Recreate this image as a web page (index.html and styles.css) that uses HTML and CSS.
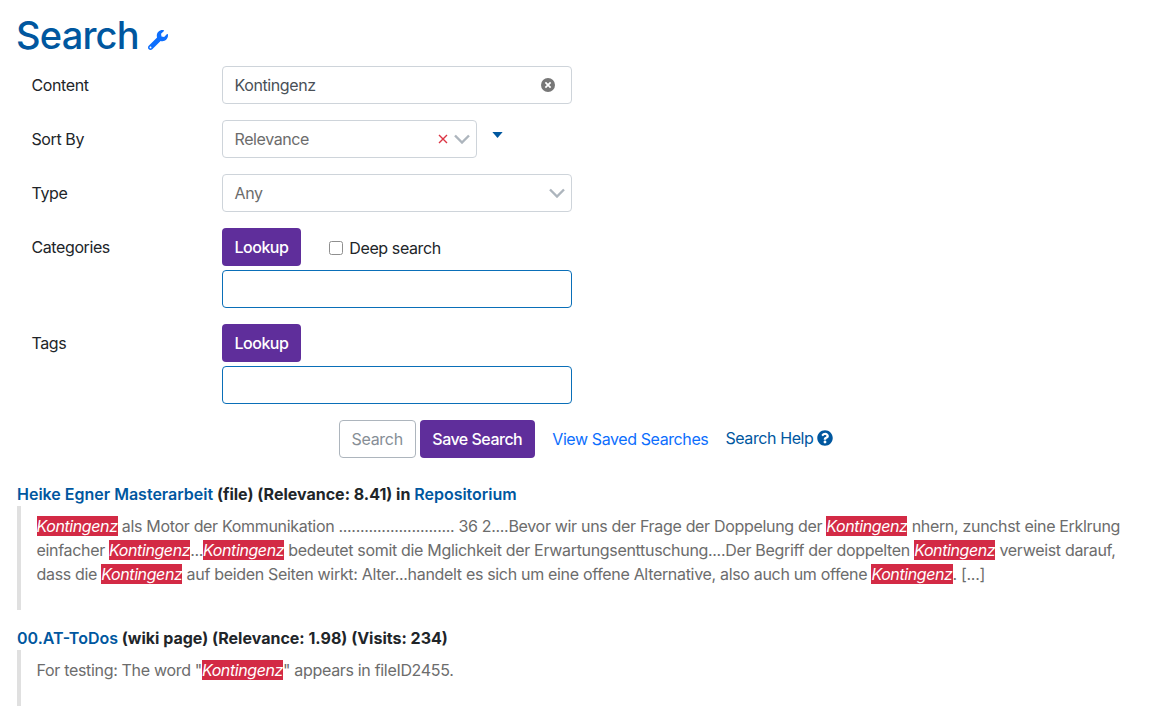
FILE: index.html
```html
<!DOCTYPE html>
<html lang="en">
<head>
<meta charset="utf-8">
<title>Search</title>
<link rel="stylesheet" href="styles.css">
</head>
<body>
<h1 class="title">Search <a class="wrench" href="#"><svg viewBox="0 0 512 512" width="20" height="20"><path fill="#0d6efd" d="M507.73 109.1c-2.24-9.03-13.54-12.09-20.12-5.51l-74.36 74.36-67.88-11.31-11.31-67.88 74.36-74.36c6.62-6.62 3.43-17.9-5.66-20.16-47.38-11.74-99.55.91-136.58 37.93-39.64 39.64-50.55 97.1-34.05 147.2L18.74 402.76c-24.99 24.99-24.99 65.51 0 90.5 24.99 24.99 65.51 24.99 90.5 0l213.21-213.21c50.12 16.71 107.47 5.68 147.37-34.22 37.07-37.07 49.7-89.32 37.91-136.73zM64 472c-13.25 0-24-10.75-24-24 0-13.26 10.75-24 24-24s24 10.74 24 24c0 13.25-10.75 24-24 24z"/></svg></a></h1>
<form class="form">
  <div class="row">
    <label class="label">Content</label>
    <div class="field">
      <div class="control wide"><span class="value dark">Kontingenz</span>
        <svg class="clear" viewBox="0 0 16 16" width="14" height="14"><circle cx="8" cy="8" r="8" fill="#777"/><path d="M5 5l6 6M11 5l-6 6" stroke="#fff" stroke-width="2"/></svg>
      </div>
    </div>
  </div>
  <div class="row">
    <label class="label">Sort By</label>
    <div class="field sort">
      <div class="control narrow"><span class="value">Relevance</span>
        <svg class="x" viewBox="0 0 10 10" width="10" height="10"><path d="M1 1l8 8M9 1l-8 8" stroke="#dc3545" stroke-width="1.4"/></svg>
        <svg class="chev" viewBox="0 0 16 10" width="16" height="10"><path d="M1 1.5l7 7 7-7" fill="none" stroke="#adb5bd" stroke-width="2.4"/></svg>
      </div>
      <svg class="caret" viewBox="0 0 12 7" width="11" height="6"><path d="M0 0h12L6 7z" fill="#00579f"/></svg>
    </div>
  </div>
  <div class="row">
    <label class="label">Type</label>
    <div class="field">
      <div class="control wide"><span class="value">Any</span>
        <svg class="chev" viewBox="0 0 16 10" width="16" height="10"><path d="M1 1.5l7 7 7-7" fill="none" stroke="#adb5bd" stroke-width="2.4"/></svg>
      </div>
    </div>
  </div>
  <div class="row">
    <label class="label">Categories</label>
    <div class="field stack">
      <div class="tools">
        <button class="btn purple" type="button">Lookup</button>
        <label class="check"><span class="box"></span>Deep search</label>
      </div>
      <div class="control wide focus"></div>
    </div>
  </div>
  <div class="row">
    <label class="label">Tags</label>
    <div class="field stack">
      <div class="tools">
        <button class="btn purple" type="button">Lookup</button>
      </div>
      <div class="control wide focus"></div>
    </div>
  </div>
  <div class="actions">
    <button class="btn ghost" type="button">Search</button>
    <button class="btn purple" type="button">Save Search</button>
    <a class="view" href="#">View Saved Searches</a>
    <a class="help" href="#">Search Help <svg viewBox="0 0 512 512" width="16" height="16"><path fill="#00579f" d="M504 256c0 137-111 248-248 248S8 393 8 256C8 119 119 8 256 8s248 111 248 248zM262.7 90c-54.5 0-89.3 23-116.5 63.8-3.5 5.3-2.4 12.4 2.7 16.3l34.7 26.3c5.2 3.9 12.6 3 16.7-2.1 17.9-22.7 30.1-35.8 57.3-35.8 20.4 0 45.7 13.1 45.7 32.9 0 15-12.4 22.7-32.5 34C247.1 238.5 216 254.9 216 296v4c0 6.6 5.4 12 12 12h56c6.6 0 12-5.4 12-12v-1.3c0-28.5 83.2-29.6 83.2-106.7 0-58-60.2-102-116.5-102zM256 338c-25.4 0-46 20.6-46 46 0 25.4 20.6 46 46 46s46-20.6 46-46c0-25.4-20.6-46-46-46z"/></svg></a>
  </div>
</form>
<section class="results">
  <div class="result">
    <div class="heading"><a href="#">Heike Egner Masterarbeit</a> (file) (Relevance: 8.41) in <a href="#">Repositorium</a></div>
    <blockquote class="quote tall"><mark>Kontingenz</mark> als Motor der Kommunikation ........................... 36 2....Bevor wir uns der Frage der Doppelung der <mark>Kontingenz</mark> nhern, zunchst eine Erklrung einfacher <mark>Kontingenz</mark>...<mark>Kontingenz</mark> bedeutet somit die Mglichkeit der Erwartungsenttuschung....Der Begriff der doppelten <mark>Kontingenz</mark> verweist darauf, dass die <mark>Kontingenz</mark> auf beiden Seiten wirkt: Alter...handelt es sich um eine offene Alternative, also auch um offene <mark>Kontingenz</mark>. [...]</blockquote>
  </div>
  <div class="result">
    <div class="heading"><a href="#">00.AT-ToDos</a> (wiki page) (Relevance: 1.98) (Visits: 234)</div>
    <blockquote class="quote">For testing: The word "<mark>Kontingenz</mark>" appears in fileID2455.</blockquote>
  </div>
</section>
</body>
</html>
```
FILE: styles.css
```css
* { box-sizing: border-box; }
html, body { margin: 0; padding: 0; }
body {
  font-family: Inter, "Liberation Sans", sans-serif;
  font-size: 16px;
  line-height: 24px;
  letter-spacing: -0.4px;
  color: #212529;
  background: #fff;
  padding: 0 17px;
}
.title {
  margin: 0 0 0 -1px;
  padding-top: 12px;
  height: 66px;
  font-size: 38px;
  line-height: 46px;
  font-weight: 500;
  letter-spacing: -0.8px;
  color: #00579f;
}
.wrench { display: inline-block; vertical-align: -1px; }
.form { display: flex; flex-direction: column; }
.row { display: flex; margin-bottom: 16px; }
.label { width: 205px; padding-left: 14.5px; padding-top: 7px; }
.field { display: flex; width: 350px; }
.field.stack { flex-direction: column; gap: 4px; }
.field.sort { width: auto; gap: 15px; }
.control {
  height: 38px;
  border: 1px solid #ced4da;
  border-radius: 4px;
  display: flex;
  align-items: center;
  padding: 0 12px 0 11.5px;
  background: #fff;
}
.wide { width: 350px; }
.narrow { width: 255px; }
.focus { border-color: #0a6fb8; }
.value { flex: 1; color: #6c6c6c; }
.value.dark { color: #495057; }
.clear { margin-right: 4px; }
.x { margin-right: 6px; }
.chev { margin-right: -6px; }
.caret { margin-top: 12px; }
.tools { display: flex; align-items: center; height: 38px; }
.btn {
  height: 38px;
  padding: 0 12px 0 11.5px;
  border-radius: 4px;
  font: inherit;
  letter-spacing: -0.5px;
  border: 1px solid transparent;
}
.purple { background: #5f2e9b; color: #fff; font-weight: 500; }
.ghost { background: #fff; border-color: #adb5bd; color: #868e96; letter-spacing: -0.3px; }
.check { display: flex; align-items: center; margin-left: 28px; padding-top: 1px; }
.box {
  width: 14px;
  height: 14px;
  border: 1px solid #8f8f8f;
  border-radius: 2.5px;
  margin-right: 6px;
}
.actions {
  display: flex;
  align-items: center;
  height: 38px;
  padding-left: 322px;
  gap: 4px;
}
a { text-decoration: none; color: #00579f; }
.view { color: #0d6efd; margin-left: 13px; }
.help { margin-left: 13px; margin-top: -2px; display: flex; align-items: center; gap: 4px; }
.results { margin-top: 24px; }
.result { margin-bottom: 16px; }
.heading { font-size: 16px; line-height: 24px; font-weight: 700; color: #212529; letter-spacing: 0; }
.heading a { font-weight: 600; }
.quote {
  margin: 0;
  border-left: 4px solid #e0e0e0;
  padding: 8px 16px 24px 15.5px;
  color: #6c6c6c;
  font-size: 16px;
  line-height: 24px;
  letter-spacing: -0.32px;
}
mark { background: #d32a45; color: #fff; font-style: italic; letter-spacing: -0.4px; }
```
